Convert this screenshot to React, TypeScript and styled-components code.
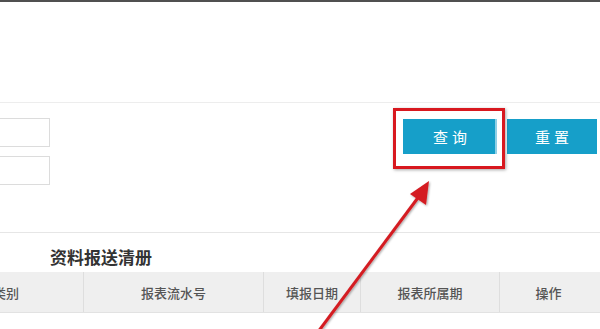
import React from "react";
import styled, { createGlobalStyle } from "styled-components";

const Global = createGlobalStyle`
  html, body { margin: 0; padding: 0; background: #fff; }
  body {
    width: 600px; height: 329px; overflow: hidden;
    font-family: "Noto Sans CJK SC", "Microsoft YaHei", sans-serif;
  }
`;

const Page = styled.div`
  position: relative;
  width: 600px;
  height: 329px;
  overflow: hidden;
`;

const TopBar = styled.div`
  height: 100px;
  border-top: 2px solid #505050;
`;

const FormSection = styled.div`
  display: flex;
  justify-content: space-between;
  align-items: flex-start;
  height: 131px;
  border-top: 1px solid #ededed;
  border-bottom: 1px solid #e6e6e6;
  padding-top: 15px;
  box-sizing: border-box;
`;

const Inputs = styled.div`
  display: flex;
  flex-direction: column;
  gap: 9px;
  margin-left: -120px;
`;

const Field = styled.div`
  width: 170px;
  height: 29px;
  box-sizing: border-box;
  border: 1px solid #dcdcdc;
  background: #fff;
`;

const Buttons = styled.div`
  display: flex;
  gap: 10px;
  margin-top: 1px;
  margin-right: 3px;
`;

const Btn = styled.button<{ $w: number; $edge?: boolean }>`
  width: ${(p) => p.$w}px;
  height: 35px;
  border: none;
  padding: 0;
  background: #169fc9;
  color: #fff;
  font-family: inherit;
  font-size: 15px;
  letter-spacing: 4px;
  text-indent: 4px;
  box-shadow: ${(p) => (p.$edge ? "inset -2px 0 0 #8fd0e6" : "none")};
`;

const ListSection = styled.div`
  padding-top: 12px;
`;

const Title = styled.h2`
  margin: 0 0 3px 50px;
  font-size: 17px;
  line-height: 24px;
  font-weight: 700;
  color: #333;
`;

const HeaderRow = styled.div`
  display: grid;
  grid-template-columns: 180px 180px 97px 139px 98px;
  margin-left: -97px;
  height: 40px;
  background: #efefef;
  border-bottom: 1px solid #e2e2e2;
`;

const HeadCell = styled.div`
  display: flex;
  align-items: center;
  justify-content: center;
  font-size: 13px;
  font-weight: 500;
  color: #555;
  border-left: 1px solid #dedede;
  &:first-child { border-left: none; }
`;

const Highlight = styled.div`
  position: absolute;
  left: 393px;
  top: 108px;
  width: 112px;
  height: 61px;
  box-sizing: border-box;
  border: 3px solid #d8181f;
  box-shadow: 1px 1px 3px rgba(0, 0, 0, 0.35);
  pointer-events: none;
`;

const ArrowSvg = styled.svg`
  position: absolute;
  left: 0;
  top: 0;
  pointer-events: none;
`;

export default function App() {
  return (
    <Page>
      <Global />
      <TopBar />
      <FormSection>
        <Inputs>
          <Field />
          <Field />
        </Inputs>
        <Buttons>
          <Btn $w={94} $edge>查询</Btn>
          <Btn $w={90}>重置</Btn>
        </Buttons>
      </FormSection>
      <ListSection>
        <Title>资料报送清册</Title>
        <HeaderRow>
          <HeadCell>报表类别</HeadCell>
          <HeadCell>报表流水号</HeadCell>
          <HeadCell>填报日期</HeadCell>
          <HeadCell>报表所属期</HeadCell>
          <HeadCell>操作</HeadCell>
        </HeaderRow>
      </ListSection>
      <Highlight />
      <ArrowSvg width="600" height="329" viewBox="0 0 600 329">
        <defs>
          <filter id="sh" x="-20%" y="-20%" width="140%" height="140%">
            <feDropShadow dx="1" dy="1" stdDeviation="1" floodColor="#000" floodOpacity="0.35" />
          </filter>
        </defs>
        <g filter="url(#sh)">
          <line x1="318" y1="332" x2="420" y2="195" stroke="#d41c22" strokeWidth="3" />
          <polygon points="429,181 426,205 410,194" fill="#d41c22" />
        </g>
      </ArrowSvg>
    </Page>
  );
}
